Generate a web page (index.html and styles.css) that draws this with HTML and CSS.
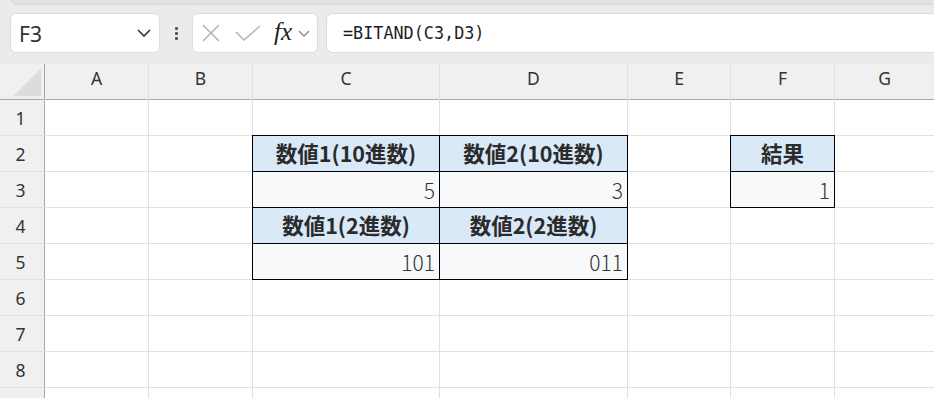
FILE: index.html
```html
<!DOCTYPE html>
<html lang="ja">
<head>
    <meta charset="UTF-8">
    <title>BITAND</title>
    <link rel="stylesheet" href="styles.css">
</head>
<body>
    <div class="toolbar">
        <div class="ribbon-edge"></div>
        <div class="bar-row">
            <div class="name-box">
                <span>F3</span>
                <svg width="14" height="8" viewBox="0 0 14 8"><polyline points="1,1 7,7 13,1" fill="none" stroke="#333" stroke-width="1.6"/></svg>
            </div>
            <div class="dots"><i></i><i></i><i></i></div>
            <div class="fn-box">
                <svg class="ic-x" width="20" height="20" viewBox="0 0 20 20"><path d="M2 2 L18 18 M18 2 L2 18" stroke="#b5b5b5" stroke-width="1.6" fill="none"/></svg>
                <svg class="ic-check" width="26" height="16" viewBox="0 0 26 16"><polyline points="1,7 9,15 25,1" fill="none" stroke="#b5b5b5" stroke-width="1.6"/></svg>
                <span class="fx">fx</span>
                <svg class="ic-down" width="12" height="7" viewBox="0 0 12 7"><polyline points="1,1 6,6 11,1" fill="none" stroke="#8a8a8a" stroke-width="1.4"/></svg>
            </div>
            <div class="formula">=BITAND(C3,D3)</div>
        </div>
    </div>

    <div class="sheet">
        <div class="corner"><span class="tri"></span></div>
        <div class="col-h">A</div>
        <div class="col-h">B</div>
        <div class="col-h">C</div>
        <div class="col-h">D</div>
        <div class="col-h">E</div>
        <div class="col-h">F</div>
        <div class="col-h">G</div>

        <div class="row-h">1</div>
        <div></div><div></div><div></div><div></div><div></div><div></div><div></div>

        <div class="row-h">2</div>
        <div></div><div></div>
        <div class="hd">数値1(10進数)</div>
        <div class="hd">数値2(10進数)</div>
        <div></div>
        <div class="hd">結果</div>
        <div></div>

        <div class="row-h">3</div>
        <div></div><div></div>
        <div class="val">5</div>
        <div class="val">3</div>
        <div></div>
        <div class="val">1</div>
        <div></div>

        <div class="row-h">4</div>
        <div></div><div></div>
        <div class="hd">数値1(2進数)</div>
        <div class="hd">数値2(2進数)</div>
        <div></div><div></div><div></div>

        <div class="row-h">5</div>
        <div></div><div></div>
        <div class="val">101</div>
        <div class="val">011</div>
        <div></div><div></div><div></div>

        <div class="row-h">6</div>
        <div></div><div></div><div></div><div></div><div></div><div></div><div></div>

        <div class="row-h">7</div>
        <div></div><div></div><div></div><div></div><div></div><div></div><div></div>

        <div class="row-h">8</div>
        <div></div><div></div><div></div><div></div><div></div><div></div><div></div>

        <!-- row 9, only its top edge is visible -->
        <div class="row-h"></div>
        <div></div><div></div><div></div><div></div><div></div><div></div><div></div>
    </div>
</body>
</html>
```

FILE: styles.css
```css
body {
    margin: 0;
    width: 934px;
    height: 398px;
    overflow: hidden;
    background-color: #ececec;
    font-family: "Noto Sans", "Noto Sans CJK JP", sans-serif;
    color: #262626;
}

.toolbar {
    height: 64px;
    background-color: #ebebeb;
    position: relative;
}

.ribbon-edge {
    position: absolute;
    left: 10px;
    right: 0;
    top: -6px;
    height: 9px;
    background-color: #e4e4e4;
    border-radius: 0 0 0 8px;
    box-shadow: 0 1px 3px rgba(0, 0, 0, 0.12);
}

.bar-row {
    display: flex;
    align-items: center;
    padding: 13px 0 0 10px;
    height: 40px;
}

.name-box,
.fn-box,
.formula {
    height: 40px;
    box-sizing: border-box;
    background-color: white;
    border: 1px solid #dcdcdc;
    border-radius: 6px;
    display: flex;
    align-items: center;
}

.name-box {
    width: 150px;
    padding: 0 8px 0 8px;
    justify-content: space-between;
    font-size: 21px;
    color: #333;
}

.name-box span {
    margin-top: 2px;
}

.dots {
    width: 32px;
    display: flex;
    flex-direction: column;
    align-items: center;
    gap: 2px;
}

.dots i {
    display: block;
    width: 3px;
    height: 3px;
    border-radius: 1px;
    background-color: #555;
}

.fn-box {
    width: 126px;
    padding-left: 8px;
}

.ic-x {
    margin-right: 14px;
}

.ic-check {
    margin-right: 13px;
}

.fx {
    font-family: "Liberation Serif", serif;
    font-style: italic;
    font-size: 25px;
    color: #222;
    margin-right: 6px;
    margin-top: -3px;
}

.formula {
    margin-left: 8px;
    flex: 1;
    border-right: none;
    border-radius: 6px 0 0 6px;
    padding-left: 16px;
    font-family: "DejaVu Sans Mono", monospace;
    font-size: 16.8px;
    color: #1e1e1e;
}

.sheet {
    display: grid;
    grid-template-columns: 44px 103px 103px 186px 187px 102px 103px 1fr;
    grid-auto-rows: 35px;
    gap: 1px;
    background-color: #e1e1e1;
    height: 334px;
    overflow: hidden;
}

.sheet > div {
    background-color: white;
    display: flex;
    align-items: center;
}

.sheet > .corner {
    background-color: #f0f0f0;
    position: relative;
    box-shadow: 0 1px 0 #a8a8a8, 1px 0 0 #a8a8a8;
}

.tri {
    position: absolute;
    right: 3px;
    bottom: 3px;
    width: 28px;
    height: 28px;
    background: linear-gradient(to top left, #dcdcdc 50%, transparent 50%);
}

.sheet > .col-h {
    background-color: #f0f0f0;
    justify-content: center;
    font-size: 17.5px;
    color: #333;
    padding-bottom: 7px;
    box-sizing: border-box;
    box-shadow: 0 1px 0 #a8a8a8;
}

.sheet > .row-h {
    background-color: #f0f0f0;
    justify-content: center;
    font-size: 17.5px;
    color: #333;
    padding-right: 3px;
    box-sizing: border-box;
    box-shadow: 1px 0 0 #a8a8a8;
}

.sheet > .hd {
    background-color: #dae9f8;
    justify-content: center;
    font-family: "Noto Sans CJK JP", sans-serif;
    font-weight: bold;
    font-size: 21.5px;
    color: #2b2b2b;
    outline: 1px solid #000;
    padding-bottom: 3px;
    box-sizing: border-box;
}

.sheet > .val {
    background-color: #f8f9fb;
    justify-content: flex-end;
    padding-right: 4px;
    font-family: "Noto Sans CJK JP", sans-serif;
    font-weight: 300;
    font-size: 21px;
    color: #333;
    outline: 1px solid #000;
    box-sizing: border-box;
}
```
